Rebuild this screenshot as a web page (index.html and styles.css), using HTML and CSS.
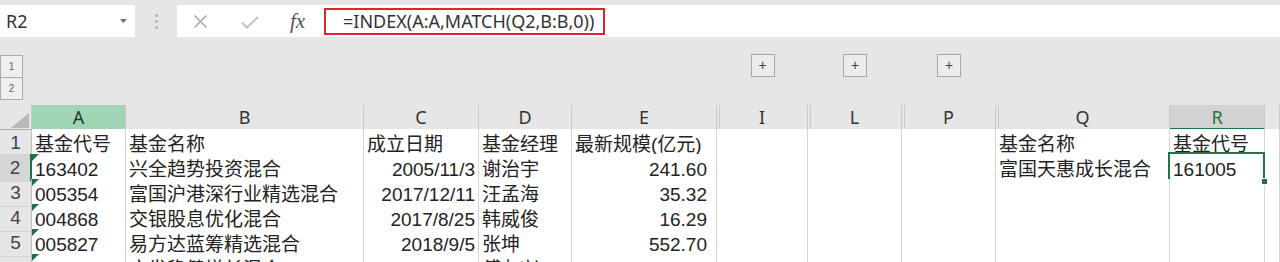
FILE: index.html
```html
<!DOCTYPE html>
<html lang="zh-CN">
<head>
  <meta charset="UTF-8" />
  <title>基金代号查找 - INDEX/MATCH</title>
  <link rel="stylesheet" href="styles.css">
</head>
<body>

  <!-- formula bar -->
  <div class="formula-bar">
    <div class="name-box">
      <span>R2</span>
      <svg class="caret" width="7" height="4" viewBox="0 0 7 4"><path d="M0 0h7L3.5 4z" fill="#707070"/></svg>
    </div>
    <div class="grip"><i></i><i></i><i></i></div>
    <div class="formula-input">
      <div class="fx-buttons">
        <svg class="icon-x" width="15" height="15" viewBox="0 0 15 15"><path d="M1.5 1.5l12 12M13.5 1.5l-12 12" stroke="#a8a8a8" stroke-width="1.6" fill="none"/></svg>
        <svg class="icon-check" width="18" height="13" viewBox="0 0 18 13"><path d="M1 6.5l5 5L17 1" stroke="#c4c4c4" stroke-width="2" fill="none"/></svg>
        <span class="fx">fx</span>
      </div>
      <div class="formula-text">=INDEX(A:A,MATCH(Q2,B:B,0))</div>
    </div>
  </div>

  <!-- sheet -->
  <div class="sheet">
    <div class="row outline">
      <div class="levels">
        <div class="lvl">1</div>
        <div class="lvl">2</div>
      </div>
      <div></div><div></div><div></div><div></div><div></div>
      <div class="plus-cell"><span class="plus">+</span></div>
      <div class="plus-cell"><span class="plus">+</span></div>
      <div class="plus-cell"><span class="plus">+</span></div>
      <div></div><div></div><div></div>
    </div>

    <div class="row col-heads">
      <div class="ch corner">
        <svg width="18" height="15" viewBox="0 0 18 15"><path d="M18 0v15H0z" fill="#b7b7b7"/></svg>
      </div>
      <div class="ch active-col">A</div>
      <div class="ch">B</div>
      <div class="ch">C</div>
      <div class="ch">D</div>
      <div class="ch">E</div>
      <div class="ch hidden-before">I</div>
      <div class="ch hidden-before">L</div>
      <div class="ch hidden-before">P</div>
      <div class="ch hidden-before">Q</div>
      <div class="ch selected-col">R</div>
      <div class="ch"></div>
    </div>

    <div class="row">
      <div class="rh">1</div>
      <div class="c">基金代号</div>
      <div class="c">基金名称</div>
      <div class="c">成立日期</div>
      <div class="c">基金经理</div>
      <div class="c">最新规模(亿元)</div>
      <div class="c"></div><div class="c"></div><div class="c"></div>
      <div class="c">基金名称</div>
      <div class="c">基金代号</div>
      <div class="c"></div>
    </div>

    <div class="row">
      <div class="rh selected-row">2</div>
      <div class="c flag">163402</div>
      <div class="c">兴全趋势投资混合</div>
      <div class="c num">2005/11/3</div>
      <div class="c">谢治宇</div>
      <div class="c num amount">241.60</div>
      <div class="c"></div><div class="c"></div><div class="c"></div>
      <div class="c">富国天惠成长混合</div>
      <div class="c active-cell">161005</div>
      <div class="c"></div>
    </div>

    <div class="row">
      <div class="rh">3</div>
      <div class="c flag">005354</div>
      <div class="c">富国沪港深行业精选混合</div>
      <div class="c num">2017/12/11</div>
      <div class="c">汪孟海</div>
      <div class="c num amount">35.32</div>
      <div class="c"></div><div class="c"></div><div class="c"></div>
      <div class="c"></div><div class="c"></div><div class="c"></div>
    </div>

    <div class="row">
      <div class="rh">4</div>
      <div class="c flag">004868</div>
      <div class="c">交银股息优化混合</div>
      <div class="c num">2017/8/25</div>
      <div class="c">韩威俊</div>
      <div class="c num amount">16.29</div>
      <div class="c"></div><div class="c"></div><div class="c"></div>
      <div class="c"></div><div class="c"></div><div class="c"></div>
    </div>

    <div class="row">
      <div class="rh">5</div>
      <div class="c flag">005827</div>
      <div class="c">易方达蓝筹精选混合</div>
      <div class="c num">2018/9/5</div>
      <div class="c">张坤</div>
      <div class="c num amount">552.70</div>
      <div class="c"></div><div class="c"></div><div class="c"></div>
      <div class="c"></div><div class="c"></div><div class="c"></div>
    </div>

    <!-- row 6 only peeks in at the bottom edge -->
    <div class="row">
      <div class="rh"></div>
      <div class="c flag"></div>
      <div class="c">广发稳健增长混合</div>
      <div class="c num"></div>
      <div class="c">傅友兴</div>
      <div class="c num amount"></div>
      <div class="c"></div><div class="c"></div><div class="c"></div>
      <div class="c"></div><div class="c"></div><div class="c"></div>
    </div>
  </div>

</body>
</html>
```

FILE: styles.css
```css
body {
  margin: 0;
  width: 1280px;
  height: 262px;
  overflow: hidden;
  background: #e6e6e6;
  font-family: "Liberation Sans", "Noto Sans CJK SC", sans-serif;
  color: #222;
}

/* formula bar */

.formula-bar {
  display: flex;
  align-items: flex-start;
  height: 48px;
  padding-top: 5px;
  box-sizing: border-box;
}

.name-box {
  width: 135px;
  height: 32px;
  box-sizing: border-box;
  background: #fff;
  display: flex;
  align-items: center;
  justify-content: space-between;
  padding: 0 8px 0 6px;
  font-family: "Noto Sans", sans-serif;
  font-size: 18px;
  color: #333;
}

.grip {
  width: 42px;
  display: flex;
  flex-direction: column;
  align-items: center;
  gap: 3px;
  padding-top: 9px;
}

.grip i {
  width: 3px;
  height: 3px;
  border-radius: 50%;
  background: #b4b4b4;
}

.formula-input {
  flex: 1;
  height: 32px;
  background: #fff;
  display: flex;
  align-items: center;
}

.fx-buttons {
  width: 147px;
  display: flex;
  align-items: center;
}

.icon-x {
  margin-left: 16px;
}

.icon-check {
  margin-left: 33px;
  margin-top: 2px;
}

.fx {
  margin-left: 31px;
  font-family: "Liberation Serif", serif;
  font-style: italic;
  font-size: 21px;
  color: #555;
}

.formula-text {
  width: 281px;
  height: 27px;
  box-sizing: border-box;
  border: 2px solid #e0242c;
  padding-left: 17px;
  font-family: "Noto Sans", sans-serif;
  font-size: 18px;
  line-height: 22px;
  color: #333;
}

/* sheet grid */

.sheet {
  --cols: 32px 94px 238px 115px 93px 145px 91px 94px 94px 174px 95px 15px;
}

.row {
  display: grid;
  grid-template-columns: var(--cols);
  height: 25px;
}

.outline {
  height: 57px;
}

.levels {
  padding-top: 7px;
}

.lvl {
  width: 23px;
  height: 23px;
  box-sizing: border-box;
  border: 1px solid #ababab;
  background: #efefef;
  font-size: 10px;
  line-height: 21px;
  text-align: center;
  color: #666;
}

.lvl + .lvl {
  height: 22px;
  border-top: none;
}

.plus-cell {
  display: flex;
  justify-content: center;
  padding-top: 6px;
}

.plus {
  width: 24px;
  height: 23px;
  box-sizing: border-box;
  border: 1px solid #a8a8a8;
  background: #ececec;
  font-size: 14px;
  line-height: 20px;
  text-align: center;
  color: #444;
}

.col-heads {
  height: 24px;
}

.ch {
  box-sizing: border-box;
  border-right: 1px solid #c8c8c8;
  border-bottom: 1px solid #ababab;
  text-align: center;
  font-family: "Noto Sans", sans-serif;
  font-size: 18px;
  line-height: 22px;
  padding-top: 1px;
  color: #333;
}

.corner {
  display: flex;
  align-items: flex-end;
  justify-content: flex-end;
  padding: 0 2px 1px 0;
}

.corner svg {
  display: block;
}

.hidden-before {
  box-shadow: inset 2px 0 0 #e6e6e6, inset 3px 0 0 #c8c8c8;
}

.active-col {
  background: #a0d6b6;
  color: #1f3b2b;
}

.selected-col {
  background: #d2d2d2;
  color: #217346;
  border-bottom: 2px solid #217346;
}

.rh {
  box-sizing: border-box;
  border-right: 1px solid #bdbdbd;
  border-bottom: 1px solid #d2d2d2;
  text-align: center;
  font-size: 19px;
  line-height: 22px;
  padding-top: 3px;
  color: #444;
}

.selected-row {
  background: #d6d6d6;
  border-right: 2px solid #217346;
}

.c {
  position: relative;
  box-sizing: border-box;
  background: #fff;
  border-right: 1px solid #d4d4d4;
  border-bottom: 1px solid #d4d4d4;
  padding: 4px 3px 0;
  white-space: nowrap;
  font-size: 19px;
  line-height: 23px;
}

.num {
  text-align: right;
}

.amount {
  padding-right: 9px;
}

.flag::before {
  content: "";
  position: absolute;
  left: 0;
  top: 0;
  border-top: 7px solid #1e7145;
  border-right: 7px solid transparent;
}

.active-cell::after {
  content: "";
  position: absolute;
  left: -2px;
  top: -2px;
  right: -1px;
  bottom: -2px;
  border: 2px solid #217346;
}

.active-cell::before {
  content: "";
  position: absolute;
  right: -4px;
  bottom: -4px;
  width: 5px;
  height: 5px;
  background: #217346;
  border: 1px solid #fff;
  z-index: 1;
}
```
